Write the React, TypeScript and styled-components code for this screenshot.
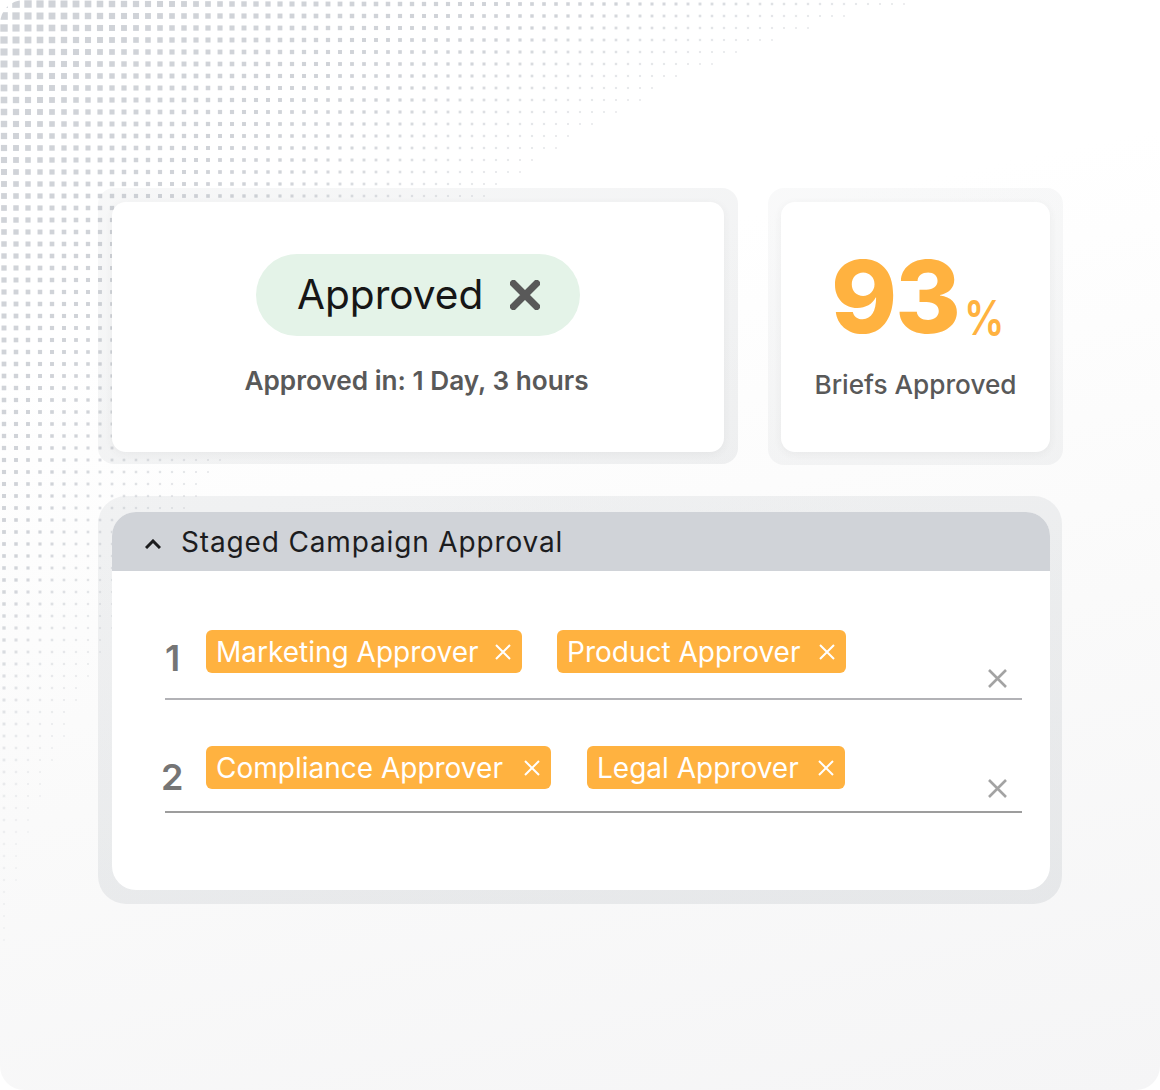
import React from "react";
import styled, {createGlobalStyle} from "styled-components";

// page global style
const GlobalStyle = createGlobalStyle`
  html, body {
    margin: 0;
    padding: 0;
    background: #fff;
    font-family: "Inter", "Liberation Sans", sans-serif;
  }
`;

const Scene = styled.div`
  position: relative;
  width: 1160px;
  height: 1090px;
  box-sizing: border-box;
  padding: 188px 97px 0 98px;
  border-radius: 24px;
  overflow: hidden;
  background: linear-gradient(168deg, #fff 28%, #fafafa 62%, #f5f5f6 100%);
`;

const DotLayer = styled.svg`
  position: absolute;
  top: 0;
  left: 0;
`;

const Content = styled.div`
  position: relative;
  display: flex;
  flex-direction: column;
  gap: 31px;
`;

const TopRow = styled.div`
  display: flex;
  gap: 30px;
`;

const Frame = styled.div<{$w: number; $h: number; $pad: string; $tint: number}>`
  width: ${p => p.$w}px;
  height: ${p => p.$h}px;
  box-sizing: border-box;
  padding: ${p => p.$pad};
  border-radius: 16px;
  background: linear-gradient(
    160deg,
    rgba(180, 185, 190, ${p => p.$tint * 0.55}),
    rgba(180, 185, 190, ${p => p.$tint})
  );
`;

const StatCard = styled.div`
  height: 100%;
  display: flex;
  flex-direction: column;
  align-items: center;
  border-radius: 14px;
  background: #fff;
  box-shadow: 0 2px 8px rgba(60, 65, 75, 0.06);
`;

const StatusPill = styled.div`
  margin-top: 52px;
  width: 324px;
  height: 82px;
  box-sizing: border-box;
  padding-left: 41px;
  display: flex;
  align-items: center;
  gap: 27px;
  border-radius: 41px;
  background: #e4f3e8;
  color: #161616;
  font-size: 40.6px;
`;

const PillLabel = styled.span`
  margin-bottom: 2px;
`;

const CaptionBold = styled.div`
  margin-top: 28px;
  margin-right: 3px;
  font-size: 26.2px;
  line-height: 34px;
  font-weight: 600;
  color: #595959;
`;

const BigStat = styled.div`
  margin-top: 41px;
  height: 108px;
  display: flex;
  align-items: baseline;
  font-size: 100px;
  line-height: 108px;
  font-weight: 800;
  letter-spacing: -2px;
  color: #ffb240;
`;

const Percent = styled.span`
  width: 36px;
  margin-left: 5px;
  font-size: 48px;
  font-weight: 600;
  letter-spacing: 0;
  transform: translateY(2px) scaleX(0.84);
  transform-origin: left;
`;

const CaptionMedium = styled.div`
  margin-top: 17px;
  font-size: 26.2px;
  line-height: 34px;
  font-weight: 550;
  color: #595959;
`;

const PanelFrame = styled.div`
  width: 964px;
  height: 408px;
  box-sizing: border-box;
  padding: 16px 12px 14px 14px;
  border-radius: 28px;
  background: linear-gradient(170deg, rgba(190, 195, 200, 0.2), rgba(190, 195, 200, 0.3));
`;

const Panel = styled.div`
  height: 100%;
  border-radius: 24px;
  overflow: hidden;
  background: #fff;
`;

const PanelHeader = styled.div`
  height: 59px;
  box-sizing: border-box;
  padding: 1px 0 0 33px;
  display: flex;
  align-items: center;
  gap: 20px;
  background: #d0d3d8;
  color: #1c1c1e;
  font-size: 28px;
  letter-spacing: 0.85px;
`;

const Chevron = styled.svg`
  display: block;
  margin-top: 3px;
`;

const PanelBody = styled.div`
  padding: 59px 28px 0 53px;
`;

const StageRow = styled.div<{$gap: number; $top: number; $line: string}>`
  display: flex;
  align-items: flex-start;
  margin-top: ${p => p.$top}px;
  padding-bottom: ${p => p.$gap}px;
  border-bottom: 2px solid ${p => p.$line};
`;

const StageNumber = styled.div<{$shift: number; $drop: number}>`
  width: 41px;
  margin-left: ${p => p.$shift}px;
  margin-right: ${p => -p.$shift}px;
  padding-top: ${p => p.$drop}px;
  font-size: 36px;
  line-height: 42px;
  font-weight: 600;
  color: #757575;
`;

const ChipGroup = styled.div<{$gap: number}>`
  display: flex;
  gap: ${p => p.$gap}px;
`;

const Chip = styled.div<{$w: number}>`
  width: ${p => p.$w}px;
  height: 43px;
  box-sizing: border-box;
  padding: 1px 11px 0 10px;
  display: flex;
  align-items: center;
  justify-content: space-between;
  border-radius: 6px;
  background: #ffb240;
  color: #fff;
  font-size: 28px;
`;

const Cross = styled.svg<{$color: string}>`
  display: block;
  flex: none;
  stroke: ${p => p.$color};
  stroke-linecap: butt;
  fill: none;
`;

const RowRemove = styled.div<{$drop: number}>`
  margin-left: auto;
  margin-right: 15px;
  padding-top: ${p => p.$drop}px;
`;

// dot field, fades out along a curved edge from the top left corner
function DotField() {
    const dots = [];
    for (let row = 0; row < 82; row++) {
        for (let col = 0; col < 80; col++) {
            const x = 4 + col * 12;
            const y = 4 + row * 12;
            const level = Math.pow(x / 920, 0.65) + Math.pow(y / 960, 0.65);
            if (level >= 1.02) continue;
            const size = Math.max(1, 2 + 6.2 * (1 - level));
            const edge = level < 0.8 ? 1 : Math.max(0.45, 1 - (level - 0.8) * 2.6);
            const low = y < 560 ? 1 : Math.max(0.45, 1 - (y - 560) / 500);
            dots.push(
                <rect key={`${row}-${col}`} x={x - size / 2} y={y - size / 2} width={size} height={size}
                      fill="#d0d3d8" opacity={edge * low}/>
            );
        }
    }
    return <DotLayer width={1160} height={1090}>{dots}</DotLayer>;
}

function CrossIcon({size, weight, color}: {size: number; weight: number; color: string}) {
    return (
        <Cross $color={color} width={size} height={size} viewBox={`0 0 ${size} ${size}`} strokeWidth={weight}>
            <path d={`M1 1 L${size - 1} ${size - 1} M${size - 1} 1 L1 ${size - 1}`}/>
        </Cross>
    );
}

export default function App() {
    return (
        <Scene>
            <GlobalStyle/>
            <DotField/>
            <Content>
                <TopRow>
                    <Frame $w={640} $h={276} $pad="14px 14px 12px" $tint={0.2}>
                        <StatCard>
                            <StatusPill>
                                <PillLabel>Approved</PillLabel>
                                <CrossIcon size={30} weight={7} color="#595959"/>
                            </StatusPill>
                            <CaptionBold>Approved in: 1 Day, 3 hours</CaptionBold>
                        </StatCard>
                    </Frame>
                    <Frame $w={295} $h={277} $pad="14px 13px 13px" $tint={0.15}>
                        <StatCard>
                            <BigStat>93<Percent>%</Percent></BigStat>
                            <CaptionMedium>Briefs Approved</CaptionMedium>
                        </StatCard>
                    </Frame>
                </TopRow>
                <PanelFrame>
                    <Panel>
                        <PanelHeader>
                            <Chevron width={16} height={10} viewBox="0 0 16 10">
                                <path d="M1 9 L8 2 L15 9" fill="none" stroke="#1c1c1e" strokeWidth={3}/>
                            </Chevron>
                            Staged Campaign Approval
                        </PanelHeader>
                        <PanelBody>
                            <StageRow $top={0} $gap={10} $line="#b2b2b6">
                                <StageNumber $shift={0} $drop={7}>1</StageNumber>
                                <ChipGroup $gap={35}>
                                    <Chip $w={316}>Marketing Approver<CrossIcon size={16} weight={2} color="#fff"/></Chip>
                                    <Chip $w={289}>Product Approver<CrossIcon size={16} weight={2} color="#fff"/></Chip>
                                </ChipGroup>
                                <RowRemove $drop={39}><CrossIcon size={19} weight={2.6} color="#a3a3a3"/></RowRemove>
                            </StageRow>
                            <StageRow $top={46} $gap={13} $line="#9d9d9d">
                                <StageNumber $shift={-4} $drop={10}>2</StageNumber>
                                <ChipGroup $gap={36}>
                                    <Chip $w={345}>Compliance Approver<CrossIcon size={16} weight={2} color="#fff"/></Chip>
                                    <Chip $w={258}>Legal Approver<CrossIcon size={16} weight={2} color="#fff"/></Chip>
                                </ChipGroup>
                                <RowRemove $drop={33}><CrossIcon size={19} weight={2.6} color="#a3a3a3"/></RowRemove>
                            </StageRow>
                        </PanelBody>
                    </Panel>
                </PanelFrame>
            </Content>
        </Scene>
    );
}
